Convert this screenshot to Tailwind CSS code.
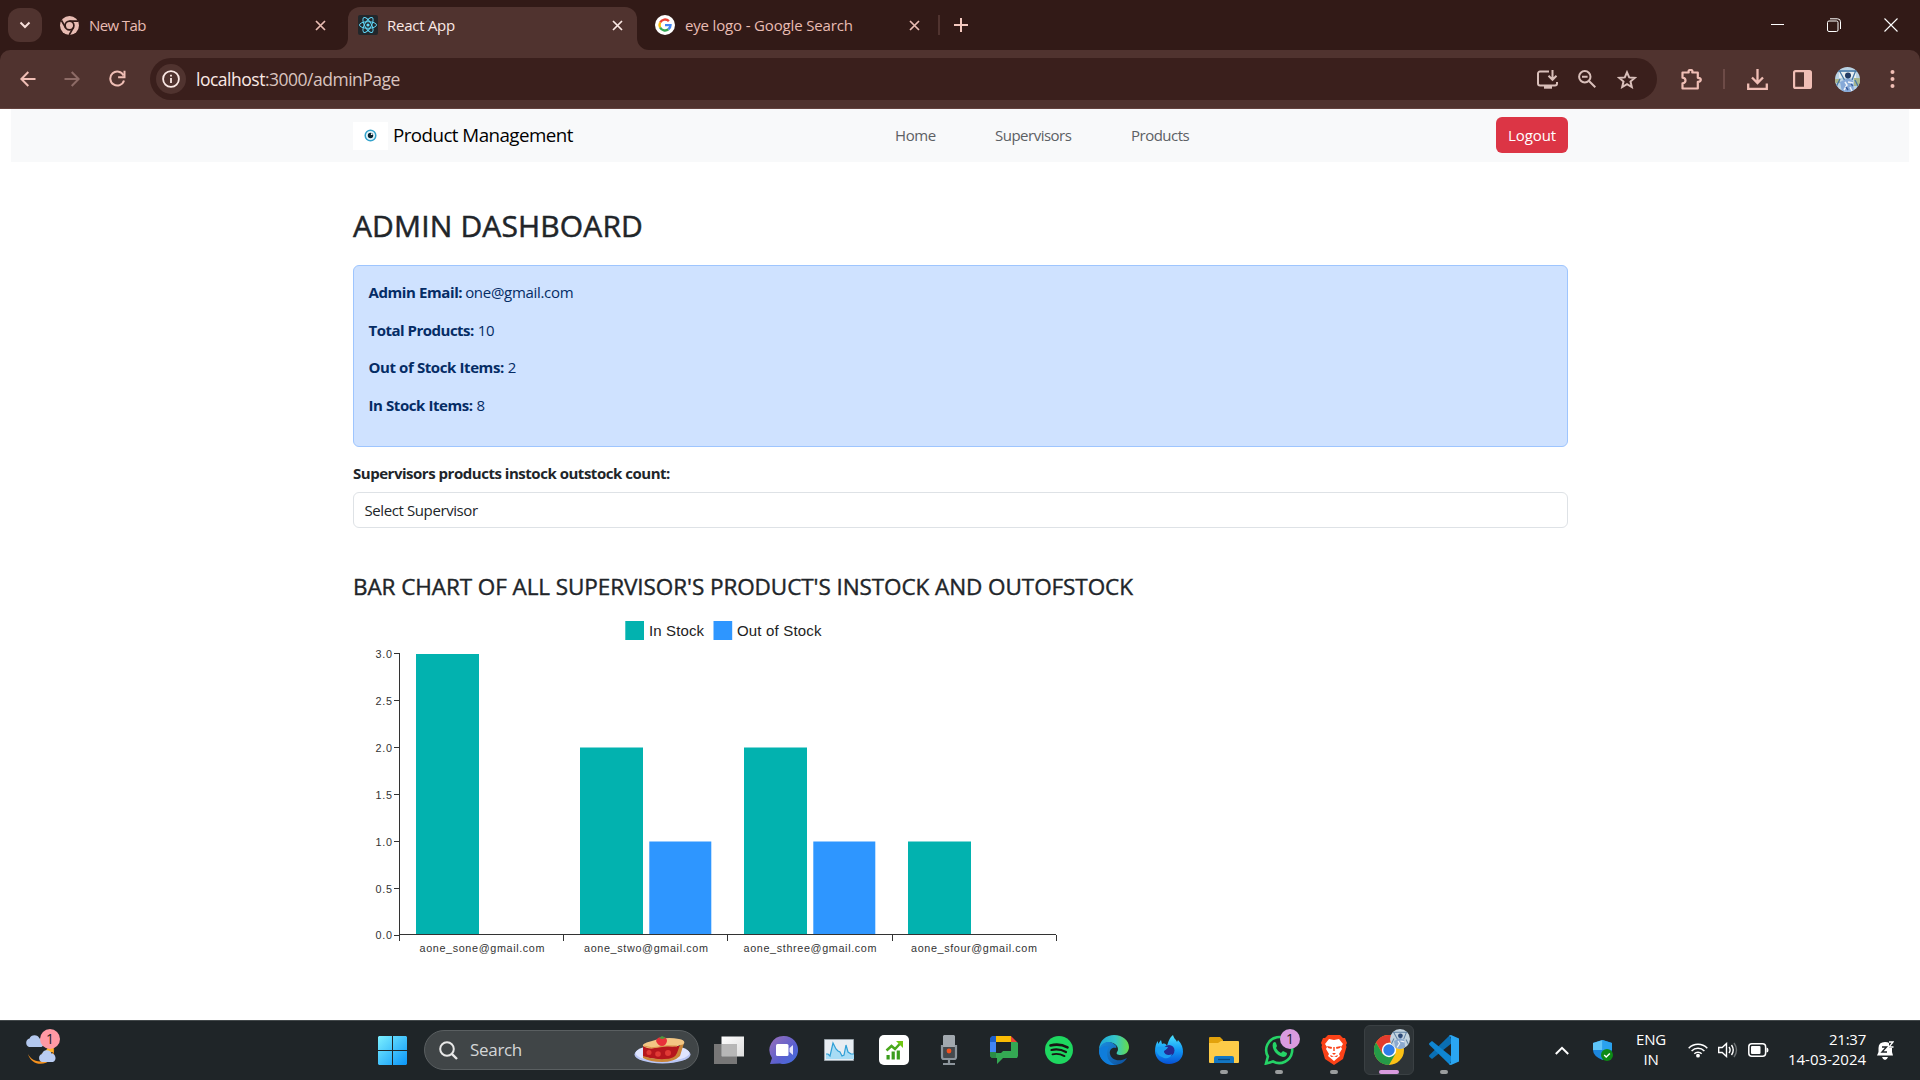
<!DOCTYPE html>
<html lang="en">
<head>
<meta charset="utf-8">
<title>React App</title>
<script src="https://cdn.jsdelivr.net/npm/@tailwindcss/browser@4"></script>
</head>
<body class="w-[1920px] h-[1080px] overflow-hidden bg-white font-['Open_Sans',sans-serif] flex flex-col whitespace-nowrap">

<!-- Tab strip -->
<header class="h-[50px] shrink-0 bg-[#321a17] flex items-start text-[15px] text-[#e9bcb3]">
  <button class="mt-2 ml-2 w-[34px] h-[34px] rounded-xl bg-[#50332f] flex items-center justify-center">
    <svg class="w-3 h-3" viewBox="0 0 12 12" fill="none" stroke="#f7dfda" stroke-width="2"><path d="M1.5 3.5 6 8l4.500-4.500"/></svg>
  </button>
  <div class="ml-[18px] w-[288px] h-[50px] flex items-center">
    <svg class="w-[19px] h-[19px] shrink-0" viewBox="0 0 19 19" fill="none" stroke="#e9bcb3"><circle cx="9.500" cy="9.500" r="9.500" fill="#e9bcb3" stroke="none"/><circle cx="9.500" cy="9.500" r="4.400" stroke="#321a17" stroke-width="1.700"/><path d="M9.500 5.100H18M5.700 11.700 1.500 4.500M13.300 11.700 9.200 19" stroke="#321a17" stroke-width="1.700"/></svg>
    <span class="ml-[10px] grow tracking-[-0.6px]">New Tab</span>
    <svg class="w-[11px] h-[11px] mr-[22px]" viewBox="0 0 11 11" stroke="#e9bcb3" stroke-width="1.700"><path d="m1 1 9 9M10 1l-9 9"/></svg>
  </div>
  <div class="relative mt-[7px] w-[289px] h-[43px] rounded-t-xl bg-[#50332f] text-[#fbe9e5] flex items-center pl-[10px] pb-[7px]">
    <svg class="absolute bottom-0 -left-3 w-3 h-3" viewBox="0 0 12 12"><path d="M12 0v12H0A12 12 0 0 0 12 0" fill="#50332f"/></svg>
    <svg class="absolute bottom-0 -right-3 w-3 h-3" viewBox="0 0 12 12"><path d="M0 0v12h12A12 12 0 0 1 0 0" fill="#50332f"/></svg>
    <svg class="w-5 h-5 shrink-0" viewBox="0 0 20 20" fill="none" stroke="#61dafb" stroke-width=".95"><rect width="20" height="20" rx="2" fill="#22272b" stroke="none"/><ellipse cx="10" cy="10" rx="8.500" ry="3.300" transform="rotate(0 10 10)"/><ellipse cx="10" cy="10" rx="8.500" ry="3.300" transform="rotate(60 10 10)"/><ellipse cx="10" cy="10" rx="8.500" ry="3.300" transform="rotate(120 10 10)"/><circle cx="10" cy="10" r="1.600" fill="#61dafb" stroke="none"/></svg>
    <span class="ml-[9px] grow tracking-[-0.26px]">React App</span>
    <svg class="w-[11px] h-[11px] mr-[14px]" viewBox="0 0 11 11" stroke="#fbe9e5" stroke-width="1.700"><path d="m1 1 9 9M10 1l-9 9"/></svg>
  </div>
  <div class="w-[303px] h-[50px] flex items-center pl-[18px]">
    <svg class="w-5 h-5 shrink-0" viewBox="0 0 20 20" fill="none" stroke-width="2.400"><circle cx="10" cy="10" r="10" fill="#fff"/><path d="M13.900 6.200A5.500 5.500 0 0 0 5.100 7.500" stroke="#ea4335"/><path d="M5.100 7.500a5.500 5.500 0 0 0 0 5" stroke="#fbbc05"/><path d="M5.100 12.500a5.500 5.500 0 0 0 8.300 1.800" stroke="#34a853"/><path d="M10 10.100h5.500a5.500 5.500 0 0 1-2.100 4.200" stroke="#4285f4"/></svg>
    <span class="ml-[10px] grow tracking-[-0.16px]">eye logo - Google Search</span>
    <svg class="w-[11px] h-[11px] mr-[20px]" viewBox="0 0 11 11" stroke="#e9bcb3" stroke-width="1.700"><path d="m1 1 9 9M10 1l-9 9"/></svg>
  </div>
  <div class="h-[50px] flex items-center">
    <div class="-ml-[2px] w-[2px] h-5 bg-[#50332f]"></div>
    <svg class="ml-[14px] w-[14px] h-[14px]" viewBox="0 0 14 14" stroke="#f3c8bf" stroke-width="2"><path d="M7 0v14M0 7h14"/></svg>
  </div>
  <div class="ml-auto h-[49px] flex items-center gap-[43px] pr-[22px]">
    <svg class="w-[13px] h-[13px]" viewBox="0 0 13 13"><path d="M0 6.500h13" stroke="#fff"/></svg>
    <svg class="w-[14px] h-[14px]" viewBox="0 0 14 14" fill="none" stroke="#fff"><rect x=".5" y="3" width="10.500" height="10.500" rx="1.500"/><path d="M3 .8h7.500a3 3 0 0 1 3 3V11"/></svg>
    <svg class="w-[14px] h-[14px]" viewBox="0 0 14 14" stroke="#fff" stroke-width="1.100"><path d="m.5.5 13 13M13.500.5l-13 13"/></svg>
  </div>
</header>

<!-- Toolbar -->
<div class="h-[59px] shrink-0 bg-[#321a17]">
  <div class="h-[59px] rounded-t-[10px] bg-[#50332f] border-b border-[#63423e] flex items-center">
    <svg class="ml-5 w-4 h-4" viewBox="0 0 16 16" fill="none" stroke="#f0beb5" stroke-width="2"><path d="M15.500 8H1.500M8.300 1 1.400 8l6.900 7"/></svg>
    <svg class="ml-7 w-4 h-4" viewBox="0 0 16 16" fill="none" stroke="#8d6b66" stroke-width="2"><path d="M.5 8h14M7.700 1l6.900 7-6.900 7"/></svg>
    <svg class="ml-[28px] w-[18px] h-[18px]" viewBox="0 0 18 18" fill="none" stroke="#f0beb5" stroke-width="2"><path d="M15.600 5.500A7 7 0 1 0 16 10.500"/><path d="M16.500.8v6.400h-6.400"/></svg>
    <div class="ml-[24px] w-[1507px] h-[42px] rounded-full bg-[#3a1f1c] flex items-center pl-[6px]">
      <div class="w-[30px] h-[30px] rounded-full bg-[#50332f] flex items-center justify-center"><svg class="w-[18px] h-[18px]" viewBox="0 0 18 18" fill="none" stroke="#fbe9e5" stroke-width="1.800"><circle cx="9" cy="9" r="7.900"/><path d="M9 8v5M9 4.800v1.800"/></svg></div>
      <span class="ml-[10px] grow text-[17.5px] tracking-[-0.49px] text-[#d9c3bf]"><span class="text-[#fbe9e5]">localhost</span>:3000/adminPage</span>
      <svg class="w-[21px] h-[19px] mr-[20px]" viewBox="0 0 21 19" fill="none" stroke="#d9bfba" stroke-width="2"><path d="M12 1.500H3a2 2 0 0 0-2 2v10a2 2 0 0 0 2 2h15a2 2 0 0 0 2-2V12M15.500 0v9.500M11.500 5.800l4 4 4-4"/><path d="M7 17.200h8" stroke-width="3"/></svg>
      <svg class="w-[18px] h-[18px] mr-[21px]" viewBox="0 0 18 18" fill="none" stroke="#d9bfba" stroke-width="2"><circle cx="6.800" cy="6.800" r="5.700"/><path d="m11 11 6.300 6.300M4 6.800h5.600"/></svg>
      <svg class="w-[20px] h-[19px] mr-[20px]" viewBox="0 0 20 19" fill="none" stroke="#d9bfba" stroke-width="2"><path d="m10 2.300 2.200 5.100 5.500.5-4.200 3.600 1.300 5.500L10 14.100 5.200 17l1.300-5.500-4.200-3.600 5.500-.5z"/></svg>
    </div>
    <svg class="ml-[24px] w-[21px] h-[21px]" viewBox="0 0 21 21"><path d="M1.500 3.500h6.200C7.200 1.500 8 1 9.500 1s2.300.5 1.800 2.500h5.500v5.300c2 0 3 .7 3 2s-1 2-3 2v6.700H1.500v-5.200c4-.6 4-5 0-5.600z" fill="none" stroke="#f0beb5" stroke-width="2.200" stroke-linejoin="round"/></svg>
    <div class="ml-[21px] w-[2px] h-5 bg-[#6d4b47]"></div>
    <svg class="ml-[22px] w-[21px] h-[21px]" viewBox="0 0 21 21" fill="none" stroke="#f0beb5" stroke-width="2.300"><path d="M10.500 0v13.500M5 8.500l5.500 5.500L16 8.500M1.200 14.500v5.300h18.600v-5.300"/></svg>
    <svg class="ml-[25px] w-[19px] h-[19px]" viewBox="0 0 19 19"><rect x="1.100" y="1.100" width="16.800" height="16.800" rx="1.500" fill="none" stroke="#f0beb5" stroke-width="2.200"/><path d="M11 1h7v17h-7z" fill="#f0beb5"/></svg>
    <svg class="ml-[23px] w-[25px] h-[25px]" viewBox="0 0 25 25"><defs><clipPath id="av"><circle cx="12.500" cy="12.500" r="12.500"/></clipPath></defs><g clip-path="url(#av)"><path fill="#b9d2e4" d="M0 0h25v25H0z"/><path fill="#e8eef0" d="M4 5h17v6H4z"/><path fill="#a8b58a" d="M19 11h6v8h-6zM0 12h5v4H0z"/><path d="M4 3l6 11M21 3l-4 10M2 4h21M5 12 1 20M20 13l4 8" stroke="#4677a5" stroke-width="1.300"/><path fill="#86a9d8" d="M5 15l8-4 5 3 1 11H7z"/><circle cx="13" cy="8.500" r="3" fill="#223b63"/><path d="m10 15 2 3-3 5m4-8 5 1m-3 4 2 4" stroke="#eef3fa" stroke-width="1.500" fill="none"/><path d="m11 20 2 3m3-6 2 2" stroke="#3b5fa0" stroke-width="1.400"/></g></svg>
    <svg class="ml-[30px] w-[5px] h-[18px]" viewBox="0 0 5 18" fill="#f0beb5"><circle cx="2.500" cy="2" r="2"/><circle cx="2.500" cy="9" r="2"/><circle cx="2.500" cy="16" r="2"/></svg>
  </div>
</div>

<!-- Page -->
<main class="h-[911px] shrink-0 overflow-hidden text-[15px] leading-[22.5px] text-[#212529]">
  <nav class="mx-[11px] h-[53px] bg-[#f8f9fa] flex items-center pl-[342px] pr-[341px] text-[#5c6064]">
    <div class="w-[35px] h-7 bg-white flex items-center justify-center mr-[5px]">
      <svg class="w-[13px] h-[13px]" viewBox="0 0 13 13"><circle cx="6.500" cy="6.500" r="5.300" fill="#e4f5fb" stroke="#34a3cc" stroke-width="1.500"/><circle cx="6.500" cy="6.500" r="2.700" fill="#08232f"/><circle cx="7.700" cy="5.200" r=".9" fill="#fff"/></svg>
    </div>
    <span class="text-[18.75px] tracking-[-0.55px] text-black w-[502px]">Product Management</span>
    <span class="w-[100px] tracking-[-0.4px]">Home</span>
    <span class="w-[136px] tracking-[-0.5px]">Supervisors</span>
    <span class="tracking-[-0.5px]">Products</span>
    <button class="ml-auto mb-px w-[72px] h-9 rounded-md bg-[#dc3545] text-white tracking-[-0.1px]">Logout</button>
  </nav>
  <div class="ml-[353px] w-[1215px]">
    <h2 class="mt-[46px] text-[30px] leading-9 font-medium tracking-[0.15px] [-webkit-text-stroke:0.5px_#212529]">ADMIN DASHBOARD</h2>
    <section class="mt-[21px] h-[182px] rounded-md border border-[#9ec5fe] bg-[#cfe2ff] text-[#052c65] py-[15px] px-[14.5px] flex flex-col gap-[15px]">
      <p><b class="tracking-[-0.4px]">Admin Email:</b> <span class="-ml-px tracking-[-0.3px]">one@gmail.com</span></p>
      <p><b class="tracking-[-0.5px]">Total Products:</b> <span class="tracking-[-0.4px]">10</span></p>
      <p><b class="tracking-[-0.4px]">Out of Stock Items:</b> 2</p>
      <p><b class="tracking-[-0.42px]">In Stock Items:</b> 8</p>
    </section>
    <p class="mt-[15px] font-bold tracking-[-0.475px]">Supervisors products instock outstock count:</p>
    <div class="mt-[7.5px] h-9 rounded-md border border-[#dee2e6] px-[10.5px] flex items-center tracking-[-0.4px]">Select Supervisor</div>
    <h4 class="mt-[45px] text-[22.5px] leading-[27px] font-medium tracking-[-0.08px] [-webkit-text-stroke:0.4px_#212529]">BAR CHART OF ALL SUPERVISOR'S PRODUCT'S INSTOCK AND OUTOFSTOCK</h4>
    <svg class="mt-[10px] w-[720px] h-[360px] font-['Liberation_Sans',Arial,sans-serif]" viewBox="353 610 720 360" fill="#222">
      <path fill="#02b2af" d="M625.300 621h18.700v19h-18.700zM416 654h63v281h-63zM580 747.500h63V935h-63zM744 747.500h63V935h-63zM908 841.500h63V935h-63z"/>
      <path fill="#2e96ff" d="M713.500 621H732.200v19h-18.700zM649.300 841.500h62V935h-62zM813.300 841.500h62V935h-62z"/>
      <path fill="none" stroke="#333" d="M399.500 653v282M394 653.500h6M394 700.500h6M394 747.500h6M394 794.500h6M394 841.500h6M394 888.500h6M394 935.500h6M399 934.500h657M399.500 935v6M563.500 935v6M727.500 935v6M892.500 935v6M1056.500 935v6"/>
      <g font-size="15"><text x="649" y="636" textLength="55">In Stock</text><text x="737" y="636" textLength="84.500">Out of Stock</text></g>
      <g font-size="10.800" fill="#333"><text x="375.500" y="657.500" textLength="16.500">3.0</text><text x="375.500" y="704.500" textLength="16.500">2.5</text><text x="375.500" y="751.500" textLength="16.500">2.0</text><text x="375.500" y="798.500" textLength="16.500">1.5</text><text x="375.500" y="845.500" textLength="16.500">1.0</text><text x="375.500" y="892.500" textLength="16.500">0.5</text><text x="375.500" y="939" textLength="16.500">0.0</text></g>
      <g font-size="10.800" fill="#333"><text x="419.500" y="952" textLength="125">aone_sone@gmail.com</text><text x="584" y="952" textLength="124">aone_stwo@gmail.com</text><text x="743.500" y="952" textLength="133">aone_sthree@gmail.com</text><text x="911" y="952" textLength="126">aone_sfour@gmail.com</text></g>
    </svg>
  </div>
</main>

<!-- Taskbar -->
<footer class="h-[60px] shrink-0 bg-[#1f2528] border-t border-[#42484a] pb-px flex items-center text-white">
  <div class="relative ml-[25px] -mt-[7px] w-[40px] h-[35px]">
    <svg class="w-[40px] h-[35px]" viewBox="25 1028 40 35"><path d="M52 1041a13 13 0 0 1-24 12c3 11 16 13 23 5 4-5 4-12 1-17z" fill="#f6921e"/><path d="M49 1040a14 14 0 0 1-8 13l12-2c1-4 1-7-1-11z" fill="#ffb429"/><path d="M29 1046a4.500 4.500 0 0 1 .5-8.500 5.500 5.500 0 0 1 10 0 4.500 4.500 0 0 1 2 8.500z" fill="#b3c8ee"/><path d="M42 1061a4.200 4.200 0 0 1 0-8 5 5 0 0 1 9.500-.5 4.500 4.500 0 0 1 1.500 8.500z" fill="#b9ccf2"/></svg>
    <div class="absolute left-[15px] top-0 w-5 h-5 rounded-full bg-[#ff99a4] text-[#222] text-[14px] leading-5 text-center">1</div>
  </div>
  <svg class="ml-[313px] w-[29px] h-[29px]" viewBox="0 0 29 29"><defs><linearGradient id="win" gradientUnits="userSpaceOnUse" x1="0" y1="0" x2="29" y2="29"><stop stop-color="#7cf0ff"/><stop offset="1" stop-color="#0a95f8"/></linearGradient></defs><path fill="url(#win)" d="M1 0h13v14H0V1zM15 0h13l1 1v13H15zM0 15h14v14H1l-1-1zM15 15h14v13l-1 1H15z"/></svg>
  <div class="ml-[17px] w-[275px] h-10 rounded-full bg-[#404547] border border-[#5a5f61] flex items-center pl-[14px] pr-[7px]">
    <svg class="w-[19px] h-[19px]" viewBox="0 0 19 19" fill="none" stroke="#e8e8e8" stroke-width="2"><circle cx="8" cy="8" r="6.800"/><path d="m12.800 12.800 5.200 5.200" stroke-width="2.400"/></svg>
    <span class="ml-[12px] grow text-[17px] tracking-[-0.31px] text-[#d4d6d7]">Search</span>
    <svg class="w-[57px] h-[29px]" viewBox="0 0 57 29"><ellipse cx="28.500" cy="18.500" rx="28" ry="9" fill="#b9c6f5"/><ellipse cx="28.500" cy="17" rx="27" ry="8" fill="#dfe5ff"/><path d="M9 10h37l-2 10q-6 5-16 4L9 21z" fill="#b5161d"/><path d="M9 20Q20 24 30 23 41 23 43 17l3-8 4-2-4 13Q40 26 28 26 16 26 9 22z" fill="#c98438"/><path d="M9 10C8 8 13 6 18 5 26 2 36 1 45 3c7 1 7 6 1 6-5 3-15 0-21 2-6 2-12 2-16-1z" fill="#f3c684"/><path d="M10 10q8 3 15 1t18-1" fill="none" stroke="#d9984c"/><g fill="#e03a35"><circle cx="15" cy="16.500" r="2.500"/><circle cx="24" cy="18" r="2.800"/><circle cx="34" cy="17" r="3"/></g><path d="M22 5q1-4 6-4t5 4q-1 5-5 5t-6-5" fill="#e8303a"/><path d="m25 2 3-2 4 2-4 1z" fill="#4b9a3d"/></svg>
  </div>
  <div class="ml-[2.500px] grid grid-cols-[repeat(14,55px)] h-[58px] items-center justify-items-center">
    <svg class="w-[30px] h-[30px]" viewBox="0 0 30 30"><defs><linearGradient id="tv" x2="1" y2="1"><stop stop-color="#fff"/><stop offset="1" stop-color="#dcdcdc"/></linearGradient></defs><path fill="url(#tv)" d="M7.500 1.500h22.500v20H7.500z"/><path fill="#777" d="M0 9h7.500v12.500H23V29H0z"/><path fill="#b7b7b7" d="M7.500 9H23v12.500H7.500z"/></svg>
    <svg class="w-[30px] h-[30px]" viewBox="0 0 30 30"><defs><linearGradient id="tc" x2="1" y2="1"><stop stop-color="#9b6fb9"/><stop offset=".6" stop-color="#5a60cf"/><stop offset="1" stop-color="#3f6fe0"/></linearGradient></defs><path d="M15 1a14 14 0 1 1-4 27.400L1 29l2-6A14 14 0 0 1 15 1z" fill="url(#tc)"/><rect x="7" y="9" width="12.500" height="12" rx="1.500" fill="#fff"/><path d="m20.500 13 3.500-3v10l-3.500-3z" fill="#e6e6fb"/></svg>
    <svg class="w-[30px] h-[30px]" viewBox="0 0 30 30"><path fill="#e8edf2" stroke="#9ba4ab" d="M.5 4.500h29v21H.5z"/><path d="M2 19h2l2 2 3-13 3 6 2 2 2 1 2 4 2-1 2-10 2 7 3 2h3v5H2z" fill="#a8dcf5"/><path d="M2 19h2l2 2 3-13 3 6 2 2 2 1 2 4 2-1 2-10 2 7 3 2h3" fill="none" stroke="#2f9fd6" stroke-width="1.200"/></svg>
    <svg class="w-[30px] h-[30px]" viewBox="0 0 30 30"><rect width="30" height="30" rx="5" fill="#fff"/><path fill="#3a9c1d" d="M7.500 20h3.200v4.500H7.500zM12.600 16.500h3.200v8h-3.200zM17.700 15.500h3.200v9h-3.200z"/><path d="m7.500 15.500 5-4.500 3.500 3 6.500-7" fill="none" stroke="#4aa81c" stroke-width="2.500"/><path d="M17 6h7v7z" fill="#71c713"/></svg>
    <svg class="w-[30px] h-[30px]" viewBox="0 0 30 30"><path fill="#a1a8ae" d="M10 0h10l1 1v11H9V1z"/><path fill="#45494d" d="M9 12h12v11H9z"/><path d="M8 10v12q0 2 2 2h10q2 0 2-2V10M15 24v4M9 29h12" fill="none" stroke="#8d959c" stroke-width="2.200"/><circle cx="15" cy="16" r="2.400" fill="#f4511e"/></svg>
    <svg class="w-[30px] h-[30px]" viewBox="0 0 30 30"><path fill="#1e5fc9" d="M1 3l2-2h4v6H1z"/><path fill="#4285f4" d="M1 7h6v10H1z"/><path fill="#fbbc04" d="M7 1h15v6H7z"/><path fill="#ea4335" d="M22 1l6 6h-6z"/><path fill="#34a853" d="M22 7h6l1 1v13l-1 2H14l-6 6v-6H3l-2-2v-4h6v-1h1l1 1h1v-1h12z"/><path fill="#1f2528" d="M7 7h15v8h-7l-3 3H7z"/><path fill="#2b8c46" d="M1 17h6v6H3l-2-2z"/></svg>
    <svg class="w-[30px] h-[30px]" viewBox="0 0 30 30" fill="none" stroke="#191414" stroke-linecap="round"><circle cx="15" cy="15" r="14" fill="#1ed760" stroke="none"/><path d="M6.500 10.500q9-2.300 17 1.800" stroke-width="2.600"/><path d="M7.500 15q7.500-1.800 14.500 2" stroke-width="2.200"/><path d="M8.500 19.300q6-1.500 12 1.800" stroke-width="1.900"/></svg>
    <svg class="w-[30px] h-[30px]" viewBox="0 0 30 30"><defs><linearGradient id="e1"><stop stop-color="#1ba6dc"/><stop offset=".55" stop-color="#36c6c8"/><stop offset="1" stop-color="#68dc48"/></linearGradient><linearGradient id="e2" x2="1" y2="1"><stop stop-color="#1b8de0"/><stop offset="1" stop-color="#0c4f9c"/></linearGradient></defs><path d="M0 15C0 5 8 0 15 0c9 0 15 6 15 12 0 5-4 8-8 8s-5-1-4-3c1-1 2-4-1-7C12 5 3 7 0 15z" fill="url(#e1)"/><path d="M0 15C2 7 10 5 15 9c2 1 3 3 2 4-4-1-7 2-6 6 1 5 8 9 17 4-3 5-8 7-13 7C6 30 0 23 0 15z" fill="url(#e2)"/><path d="M10 12c-4 6-2 14 6 18-9 1-16-6-16-14 1-4 5-6 10-4z" fill="#0f7ddb"/></svg>
    <svg class="w-[30px] h-[30px]" viewBox="0 0 30 30"><defs><linearGradient id="f1" x2="0" y2="1"><stop stop-color="#4ee4ff"/><stop offset=".5" stop-color="#129bf5"/><stop offset="1" stop-color="#0751d6"/></linearGradient></defs><path d="M19 0c1 4 3 4 4 7l1-2c4 4 5 8 5 12 0 7-6 12-14 12S1 23 1 16c0-4 1-8 3-10v3l3-4 1 4c3-1 4 0 5 2 1-4 3-9 6-11z" fill="url(#f1)"/><circle cx="15" cy="15.500" r="5.500" fill="#252b91"/><path d="M2 13c4-2 8-1 12-1-1 3-4 3-4 5 1 3 5 4 8 2-2 5-7 5-10 3-3-1-6-4-6-9z" fill="#1b9ff2"/></svg>
    <div class="relative"><svg class="w-[30px] h-[30px]" viewBox="0 0 30 30"><path fill="#e2a20c" d="M0 3q0-1 1-1h10l3 3v5H0z"/><path fill="#fdcb48" d="M0 8h9l3-2h17q1 0 1 1v20q0 1-1 1H1q-1 0-1-1z"/><path fill="#1377c4" d="M5 28v-5q0-2 2-2h16q2 0 2 2v5z"/><path d="M9 24.500h12" stroke="#0b4a80" stroke-width="1.300"/></svg><i class="absolute left-[11px] top-[35px] w-2 h-1 rounded-full bg-[#9a9d9e]"></i></div>
    <div class="relative"><svg class="w-[30px] h-[30px]" viewBox="0 0 30 30"><path d="M2 28.500l1.900-7A13 13 0 1 1 9 26.500z" fill="none" stroke="#25d366" stroke-width="2.600"/><path d="M9 8q2-2 3 0l1 3-1 2q2 4 5 5l2-2 4 2q0 4-4 4C13 21 7 14 9 8z" fill="#25d366"/></svg><div class="absolute left-4 -top-[6px] w-5 h-5 rounded-full bg-[#d99bdf] text-[#222] text-[14px] leading-5 text-center">1</div><i class="absolute left-[11px] top-[35px] w-2 h-1 rounded-full bg-[#9a9d9e]"></i></div>
    <div class="relative"><svg class="w-[30px] h-[30px]" viewBox="0 0 30 30"><path fill="#fb4218" d="M9 0h12l3 3h2l2 5-1 2 .5 2-3.500 12-9 6-9-6L2.500 12l.5-2-1-2 2-5h2z"/><path fill="#fff" d="m10 4 5 1 5-1 4 5-2 3 1 2-3 5 1 2-6 5-6-5 1-2-3-5 1-2-2-3z"/><path fill="#fb4218" d="m8 11 5 1-.5 2L9 13zM22 11l-5 1 .5 2 3.500-1zM13 18h4l-2 2zM11 20l4 1.500 4-1.500-1 2-3-.5-3 .5zM14.300 12h1.400v4h-1.400z"/></svg><i class="absolute left-[11px] top-[35px] w-2 h-1 rounded-full bg-[#9a9d9e]"></i></div>
    <div class="relative w-[50px] h-[50px] rounded-md bg-[#2e3437] border border-[#3a4043]"><svg class="absolute left-[9px] top-[9px] w-[30px] h-[30px]" viewBox="0 0 30 30"><circle cx="15" cy="15" r="15" fill="#fbc116"/><path d="M2 7.500A15 15 0 0 1 28 7.500H15L8.500 18.700z" fill="#e33b2e"/><path d="M2 7.500A15 15 0 0 0 15 30l6.500-11.300L15 15 8.500 18.700z" fill="#259b48"/><circle cx="15" cy="15" r="7.200" fill="#fff"/><circle cx="15" cy="15" r="5.700" fill="#2f7de9"/></svg><svg class="absolute left-[25px] top-[3px] w-5 h-5" viewBox="0 0 25 25"><g clip-path="url(#av)"><path fill="#c3d3df" d="M0 0h25v25H0z"/><path d="M4 3l6 11M21 3l-4 10M2 4h21M5 12 1 20M20 13l4 8" stroke="#6284a5" stroke-width="1.300"/><path fill="#8ba9cf" d="M5 15l8-4 5 3 1 11H7z"/><circle cx="13" cy="8.500" r="3" fill="#2c4a78"/><path d="m10 15 2 3-3 5m4-8 5 1" stroke="#eef3fa" stroke-width="1.500" fill="none"/></g></svg><i class="absolute left-[14px] top-[44px] w-5 h-1 rounded-full bg-[#d99bdf]"></i></div>
    <div class="relative"><svg class="w-[30px] h-[30px]" viewBox="0 0 30 30"><path fill="#0a6fb4" d="m21 0 2 8L3 24 .5 22q-1-1 0-2z"/><path fill="#0f86d2" d="m21 30 2-8L3 6 .5 8q-1 1 0 2z"/><path fill="#2aa6f2" d="m22 0 8 3.500v23L22 30q-1 0-2-1l2-1V2l-2-1q1-1 2-1z"/></svg><i class="absolute left-[11px] top-[35px] w-2 h-1 rounded-full bg-[#9a9d9e]"></i></div>
  </div>
  <div class="ml-auto flex items-center pr-[26px]">
    <svg class="w-[14px] h-[9px]" viewBox="0 0 14 9" fill="none" stroke="#fff" stroke-width="2"><path d="m.8 8 6.200-6.200L13.200 8"/></svg>
    <svg class="ml-[24px] w-[20px] h-[21px]" viewBox="0 0 20 21"><path fill="#1c86dc" d="M9.500 0 19 3v7q0 6-9.500 10Q0 16 0 10V3z"/><path fill="#5ec5f8" d="M9.500 0v10H0V3z"/><path fill="#2aa2ee" d="M9.500 0 19 3v7H9.500z"/><circle cx="14" cy="15" r="6" fill="#0d8a16"/><path d="m11.200 15 2 2 3.600-3.600" fill="none" stroke="#fff" stroke-width="1.400"/></svg>
    <div class="ml-[22px] -mt-[2px] w-[32px] text-center text-[15px] leading-[20px] tracking-[-0.18px]">ENG<br>IN</div>
    <svg class="ml-[21px] w-[20px] h-[16px]" viewBox="0 0 20 16" fill="none" stroke="#fff" stroke-width="1.500"><path d="M.7 6.200a13.200 13.200 0 0 1 18.600 0M3.600 9a9 9 0 0 1 12.800 0M6.300 11.700a5.200 5.200 0 0 1 7.400 0"/><circle cx="10" cy="13.700" r="1.900" fill="#fff" stroke="none"/></svg>
    <svg class="ml-[10px] w-[20px] h-[16px]" viewBox="0 0 20 16" fill="none" stroke="#fff" stroke-width="1.400"><path d="M.7 5.500h3.500L8.500 1.500v13l-4.300-4H.7zM11 5q2.200 3 0 6M13.500 3q3.500 5 0 10"/><path d="M16 1q5 7 0 14" stroke="#6b7072"/></svg>
    <svg class="ml-[10px] w-[21px] h-[14px]" viewBox="0 0 21 14"><rect x=".8" y=".8" width="16.800" height="12.400" rx="3" fill="none" stroke="#fff" stroke-width="1.500"/><rect x="3" y="3" width="9.500" height="8" rx="1" fill="#fff"/><path d="M18.500 4.500q2 0 2 2.500t-2 2.500z" fill="#fff"/></svg>
    <div class="ml-[17px] -mt-[3px] w-[80px] text-right text-[15px] leading-[20px]"><span class="tracking-[-0.25px]">21:37</span><br><span class="tracking-[-0.03px]">14-03-2024</span></div>
    <svg class="ml-[11px] w-[17px] h-[19px]" viewBox="0 0 17 19"><path fill="#fff" d="M0 14.500 1.500 11V7q0-6 6.500-6 3 0 4 1v5h3v4l1 3.500zM5 16h6q-1 3-3 3t-3-3z"/><path d="M5 6h4.500L5 11h5" fill="none" stroke="#1f2528" stroke-width="1.400"/><path d="M12 1h4l-4 5h4.500" fill="none" stroke="#fff" stroke-width="1.300"/></svg>
  </div>
</footer>
</body>
</html>
